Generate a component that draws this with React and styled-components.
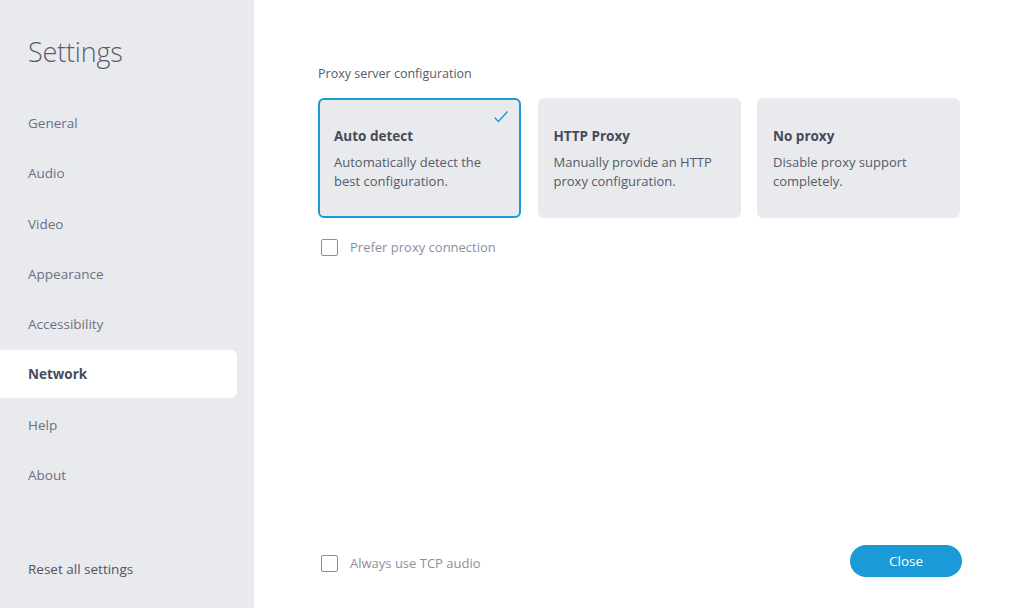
import React, { useState } from "react";
import styled, { createGlobalStyle } from "styled-components";

const GlobalStyle = createGlobalStyle`
  html, body, #root {
    margin: 0;
    height: 100%;
  }
  body {
    font-family: "Open Sans", "Noto Sans", "Liberation Sans", sans-serif;
    background: #ffffff;
  }
  * { box-sizing: border-box; }
`;

const navItems = ["General", "Audio", "Video", "Appearance", "Accessibility", "Network", "Help", "About"];

const proxyOptions = [
  { id: "auto", title: "Auto detect", desc: "Automatically detect the best configuration." },
  { id: "http", title: "HTTP Proxy", desc: "Manually provide an HTTP proxy configuration." },
  { id: "none", title: "No proxy", desc: "Disable proxy support completely." },
];

const App = () => {
  const [active, setActive] = useState("Network");
  const [proxy, setProxy] = useState("auto");
  const [preferProxy, setPreferProxy] = useState(false);
  const [tcpAudio, setTcpAudio] = useState(false);

  return (
    <Page>
      <GlobalStyle />
      <Sidebar>
        <Title>Settings</Title>
        <Nav>
          {navItems.map((item) => (
            <NavItem key={item} $active={item === active} onClick={() => setActive(item)}>
              {item}
            </NavItem>
          ))}
        </Nav>
        <Reset>Reset all settings</Reset>
      </Sidebar>
      <Main>
        <SectionLabel>Proxy server configuration</SectionLabel>
        <Cards>
          {proxyOptions.map((opt) => (
            <Card key={opt.id} $selected={proxy === opt.id} onClick={() => setProxy(opt.id)}>
              {proxy === opt.id && (
                <Check width="16" height="14" viewBox="0 0 16 14">
                  <path d="M1.5 7.5 L5.5 11.5 L14.5 1.5" fill="none" stroke="#1a9ad6" strokeWidth="1.4" />
                </Check>
              )}
              <CardTitle>{opt.title}</CardTitle>
              <CardDesc>{opt.desc}</CardDesc>
            </Card>
          ))}
        </Cards>
        <CheckRow onClick={() => setPreferProxy(!preferProxy)}>
          <Box $checked={preferProxy} />
          <CheckLabel>Prefer proxy connection</CheckLabel>
        </CheckRow>
        <Footer>
          <CheckRow onClick={() => setTcpAudio(!tcpAudio)}>
            <Box $checked={tcpAudio} />
            <CheckLabel>Always use TCP audio</CheckLabel>
          </CheckRow>
          <CloseButton>Close</CloseButton>
        </Footer>
      </Main>
    </Page>
  );
};

const Page = styled.div`
  display: flex;
  width: 1024px;
  height: 608px;
  overflow: hidden;
`;

const Sidebar = styled.aside`
  width: 254px;
  flex-shrink: 0;
  background: #e9eaed;
  display: flex;
  flex-direction: column;
  padding: 32px 17px 30px 0;
`;

const Title = styled.h1`
  margin: 0 0 0 28px;
  font-size: 27px;
  font-weight: 300;
  color: #595e6f;
  line-height: 40px;
  letter-spacing: -0.2px;
`;

const Nav = styled.nav`
  display: flex;
  flex-direction: column;
  margin-top: 27px;
`;

const NavItem = styled.div`
  height: 48px;
  margin-bottom: 2.3px;
  display: flex;
  align-items: center;
  padding-left: 28px;
  font-size: 13.5px;
  color: ${(p) => (p.$active ? "#464b5b" : "#6a7081")};
  font-weight: ${(p) => (p.$active ? 700 : 400)};
  background: ${(p) => (p.$active ? "#ffffff" : "transparent")};
  border-radius: 0 6px 6px 0;
  cursor: pointer;
`;

const Reset = styled.div`
  margin-top: auto;
  padding-left: 28px;
  font-size: 13.5px;
  color: #4f5466;
`;

const Main = styled.main`
  flex: 1;
  display: flex;
  flex-direction: column;
  padding: 65px 62px 31px 64px;
`;

const SectionLabel = styled.div`
  font-size: 12.5px;
  color: #555a6a;
  line-height: 18px;
`;

const Cards = styled.div`
  display: grid;
  grid-template-columns: repeat(3, 203px);
  gap: 16.5px;
  margin-top: 15px;
`;

const Card = styled.div`
  position: relative;
  height: 120px;
  border-radius: 6px;
  background: #e9eaed;
  border: 2px solid ${(p) => (p.$selected ? "#1a9ad6" : "transparent")};
  padding: 27px 14px 0 14px;
  cursor: pointer;
`;

const Check = styled.svg`
  position: absolute;
  top: 10px;
  right: 10px;
`;

const CardTitle = styled.div`
  font-size: 13.5px;
  font-weight: 700;
  color: #454a5a;
  line-height: 18px;
`;

const CardDesc = styled.div`
  margin-top: 8px;
  font-size: 13px;
  color: #555a6a;
  line-height: 19px;
`;

const CheckRow = styled.div`
  display: flex;
  align-items: center;
  gap: 12px;
  margin-top: 20px;
  padding-left: 3px;
  cursor: pointer;
`;

const Box = styled.span`
  width: 17px;
  height: 17px;
  border: 1.5px solid #8b8e96;
  border-radius: 2px;
  background: ${(p) => (p.$checked ? "#1a9ad6" : "#ffffff")};
`;

const CheckLabel = styled.span`
  font-size: 13px;
  color: #8a90a0;
`;

const Footer = styled.div`
  margin-top: auto;
  display: flex;
  align-items: center;
  justify-content: space-between;
  & > ${CheckRow} {
    margin-top: 0;
    padding-top: 4px;
  }
`;

const CloseButton = styled.button`
  width: 112px;
  height: 32px;
  border: none;
  border-radius: 16px;
  background: #1a9ad6;
  color: #ffffff;
  font-family: inherit;
  font-size: 13.5px;
  cursor: pointer;
`;

export default App;
